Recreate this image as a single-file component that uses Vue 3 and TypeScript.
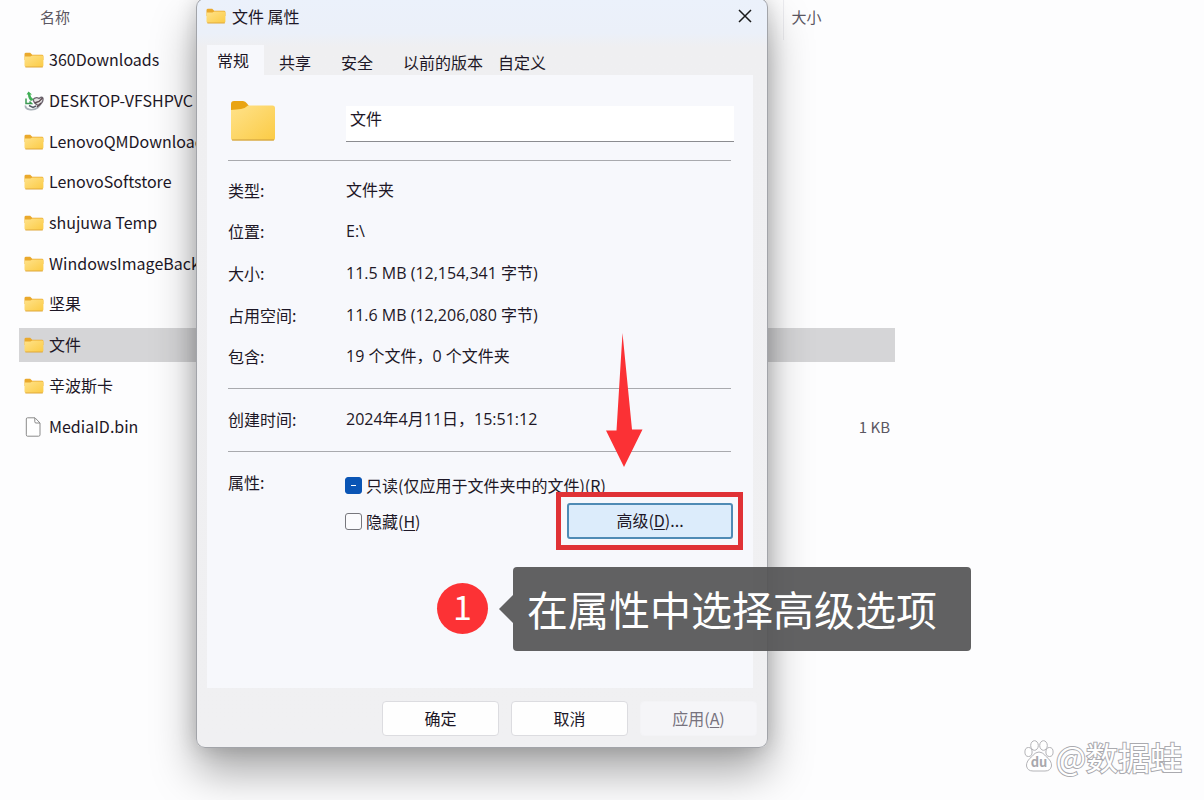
<script setup lang="ts">
import { ref } from 'vue'

type Kind = 'folder' | 'backup' | 'file'
interface Entry {
  name: string
  kind: Kind
  size?: string
}

const entries: Entry[] = [
  { name: '360Downloads', kind: 'folder' },
  { name: 'DESKTOP-VFSHPVC', kind: 'backup' },
  { name: 'LenovoQMDownload', kind: 'folder' },
  { name: 'LenovoSoftstore', kind: 'folder' },
  { name: 'shujuwa Temp', kind: 'folder' },
  { name: 'WindowsImageBackup', kind: 'folder' },
  { name: '坚果', kind: 'folder' },
  { name: '文件', kind: 'folder' },
  { name: '辛波斯卡', kind: 'folder' },
  { name: 'MediaID.bin', kind: 'file', size: '1 KB' },
]
const selected = ref('文件')

const tabs = ['常规', '共享', '安全', '以前的版本', '自定义']
const activeTab = ref('常规')

const folderName = ref('文件')
const details = [
  ['类型:', '文件夹'],
  ['位置:', 'E:\\'],
  ['大小:', '11.5 MB (12,154,341 字节)'],
  ['占用空间:', '11.6 MB (12,206,080 字节)'],
  ['包含:', '19 个文件，0 个文件夹'],
]
</script>

<template>
  <div class="stage">
    <svg class="defs" width="0" height="0" aria-hidden="true">
      <defs>
        <linearGradient id="fold" x1="0" y1="0" x2="1" y2="1">
          <stop offset="0" stop-color="#ffe28a" />
          <stop offset="1" stop-color="#fbcb45" />
        </linearGradient>
        <symbol id="folder" viewBox="0 0 20 16">
          <path d="M0.5 2.2Q0.5 .8 2 .8H6.2L8.2 2.8H18Q19.4 2.8 19.4 4.2V8H.5Z" fill="#eaa92c" />
          <path d="M.5 4.6H6.4L8.4 3.4H18Q19.4 3.4 19.4 4.8V13.6Q19.4 15 18 15H2Q.5 15 .5 13.6Z" fill="url(#fold)" />
          <path d="M1.2 14.7Q1.5 15 2 15H18Q18.6 15 19 14.6" fill="none" stroke="#e0a83a" />
        </symbol>
      </defs>
    </svg>

    <table class="files">
      <thead>
        <tr>
          <th class="name-col">名称</th>
          <th class="size-col">大小</th>
        </tr>
      </thead>
      <tbody>
        <tr v-for="e in entries" :key="e.name" :class="{ selected: e.name === selected }" @click="selected = e.name">
          <td>
            <div class="cell">
              <svg v-if="e.kind === 'folder'" class="icon" viewBox="0 0 20 16"><use href="#folder" /></svg>
              <svg v-else-if="e.kind === 'backup'" class="icon tall" viewBox="0 0 20 20">
                <path d="M1.500 14.500Q1 17.500 5 18.400Q10 19.500 14 16.500L17 13" fill="none" stroke="#a9b0b8" stroke-width="1.600" />
                <path d="M9 8.500Q12 5.500 15 7.500Q18.500 5 19 7.500Q19.500 11.500 14.500 14.500Q10.500 13 9 8.500Z" fill="#e3e0e2" stroke="#6d6670" stroke-width="1.300" />
                <path d="M10.500 12L15 10.500L18.500 7M13 16L17 12" fill="none" stroke="#5c4a50" stroke-width="1.400" />
                <path d="M4.500 .5L2.500 3.500H4Q4 7.500 7 10L9.500 8.500Q6.500 6.500 6.300 3.500H8Z" fill="#3fae55" />
                <path d="M2 7.500V12.500H7.500L5.500 10.500" fill="none" stroke="#3c9a54" stroke-width="1.500" />
                <path d="M5 14.500L9 16.500L12 15" fill="none" stroke="#555d66" stroke-width="1.500" />
              </svg>
              <svg v-else class="icon tall" viewBox="0 0 20 20">
                <path d="M3.500 .8H11L16 6V17.800Q16 19.200 14.600 19.200H3.500Q2.300 19.200 2.300 17.800V2Q2.300 .8 3.500 .8Z" fill="#fff" stroke="#8a8a8a" />
                <path d="M10.800 1V4.800Q10.800 6 12 6H16" fill="none" stroke="#8a8a8a" />
              </svg>
              <span>{{ e.name }}</span>
            </div>
          </td>
          <td><div class="cell size">{{ e.size }}</div></td>
        </tr>
      </tbody>
    </table>

    <section class="dialog" role="dialog" aria-label="文件 属性">
      <header class="title-bar">
        <svg class="icon" viewBox="0 0 20 16"><use href="#folder" /></svg>
        <h1>文件 属性</h1>
        <button class="close" type="button" aria-label="关闭">
          <svg viewBox="0 0 14 14"><path d="M1 1L13 13M13 1L1 13" stroke="#1a1a1a" stroke-width="1.500" /></svg>
        </button>
      </header>

      <nav class="tabs" role="tablist">
        <button
          v-for="t in tabs"
          :key="t"
          type="button"
          role="tab"
          :aria-selected="t === activeTab"
          :class="{ active: t === activeTab }"
          @click="activeTab = t"
        >{{ t }}</button>
      </nav>

      <div class="panel">
        <div class="identity">
          <svg class="big-folder" viewBox="0 0 44 40">
            <path d="M0 3Q0 0 3 0H12Q14.500 0 16 2.500L18 5V12H0Z" fill="#e9a413" />
            <path d="M0 9Q6 8.500 10 8Q14 7.500 17 4.500H41.500Q44 4.500 44 7V37Q44 39.500 41.500 39.500H2.500Q0 39.500 0 37Z" fill="url(#fold)" />
            <path d="M1 39H43" stroke="#c99a3c" />
          </svg>
          <input v-model="folderName" type="text" aria-label="名称" />
        </div>

        <dl class="details">
          <template v-for="[label, value] in details" :key="label">
            <dt>{{ label }}</dt>
            <dd>{{ value }}</dd>
          </template>
        </dl>

        <dl class="created">
          <dt>创建时间:</dt>
          <dd>2024年4月11日，15:51:12</dd>
        </dl>

        <div class="attributes" role="group" aria-labelledby="attr">
          <span id="attr">属性:</span>
          <div class="options">
            <label><input type="checkbox" :indeterminate="true" /><span>只读(仅应用于文件夹中的文件)(<u>R</u>)</span></label>
            <div class="second">
              <label><input type="checkbox" /><span>隐藏(<u>H</u>)</span></label>
              <button class="advanced" type="button"><span>高级(<u>D</u>)...</span></button>
            </div>
          </div>
        </div>
      </div>

      <footer class="actions">
        <button type="button">确定</button>
        <button type="button">取消</button>
        <button type="button" disabled><span>应用(<u>A</u>)</span></button>
      </footer>
    </section>

    <svg class="arrow" viewBox="0 0 38 134" aria-hidden="true">
      <path d="M17.500 0L27 96.500H37.500L19 134L1 97.500H11.500Z" fill="#fb3135" />
    </svg>
    <div class="frame"></div>
    <div class="step">1</div>
    <div class="callout">在属性中选择高级选项</div>

    <div class="watermark">
      <svg viewBox="0 0 30 32" aria-hidden="true">
        <g fill="#fff" stroke="#b4b4b8">
          <ellipse cx="4.500" cy="12" rx="3.600" ry="4.500" />
          <ellipse cx="10.500" cy="5.500" rx="3.800" ry="4.800" />
          <ellipse cx="19.500" cy="5.500" rx="3.800" ry="4.800" />
          <ellipse cx="25.500" cy="12" rx="3.600" ry="4.500" />
          <path d="M15 12Q19 12 21.500 16Q28 21 27.500 26Q26.500 31 21 31H9Q3.500 31 2.500 26Q2 21 8.500 16Q11 12 15 12Z" />
        </g>
        <text x="15" y="27" text-anchor="middle" font-size="13" font-weight="700" fill="#a8a8ad">du</text>
      </svg>
      <span>@数据蛙</span>
    </div>
  </div>
</template>

<style>
body {
  margin: 0;
  background: #fdfdfe;
}
</style>

<style scoped>
.stage {
  position: relative;
  min-height: 100vh;
  overflow: hidden;
  background: #fdfdfe;
  color: #1d1726;
  font-family: "Noto Sans CJK SC", sans-serif;
  font-size: 16px;
  line-height: 24px;
}
.defs { position: absolute; }
button, input {
  font: inherit;
  color: inherit;
}
button { cursor: pointer; }
u { text-underline-offset: 2px; }

.files {
  width: calc(100% - 328px);
  height: 447px;
  margin-left: 19px;
  border-collapse: collapse;
  table-layout: fixed;
}
th {
  height: 40px;
  padding: 0 0 6px 21px;
  box-sizing: border-box;
  color: #5b5762;
  font-size: 15px;
  font-weight: 400;
  text-align: left;
}
th.size-col {
  width: 112px;
  padding-left: 8px;
  border-left: 1px solid #ededf1;
}
td { padding: 0; }
.cell {
  display: flex;
  align-items: center;
  gap: 5px;
  height: 34px;
  padding-left: 5px;
  white-space: nowrap;
  cursor: default;
}
.cell span { padding-bottom: 2px; }
.cell.size {
  justify-content: flex-end;
  padding-right: 5px;
  color: #5b5762;
  font-size: 15px;
}
.selected .cell { background: #d5d5d7; }
.icon {
  flex: none;
  width: 20px;
  height: 16px;
}
.icon.tall { height: 20px; }

.dialog {
  position: absolute;
  top: -2px;
  left: 196px;
  display: flex;
  flex-direction: column;
  width: 572px;
  box-sizing: border-box;
  border: 1px solid #a2a4a9;
  border-radius: 9px;
  background: linear-gradient(#ebf1fb 0, #ebf0f9 34px, #efeff1 48px, #f0f0f2 100%);
  box-shadow: 0 24px 44px rgba(0, 0, 0, .34), 0 0 20px rgba(0, 0, 0, .16);
}
.title-bar {
  display: flex;
  align-items: center;
  gap: 6px;
  height: 34px;
  padding: 0 9px;
}
h1 {
  flex: 1;
  margin: 0;
  font-size: 16px;
  font-weight: 400;
}
.close {
  display: grid;
  place-items: center;
  width: 26px;
  height: 26px;
  padding: 0;
  border: 0;
  background: none;
}
.close svg {
  width: 14px;
  height: 14px;
}
.tabs {
  display: flex;
  align-items: flex-end;
  height: 42px;
  padding-left: 10px;
}
.tabs button {
  height: 27px;
  padding: 0 15px;
  border: 0;
  background: none;
  line-height: 24px;
}
.tabs button:last-child { padding: 0 0; }
.tabs button.active {
  height: 30px;
  padding-left: 10px;
  background: #f7f8fc;
}

.panel {
  height: 613px;
  margin: 0 14px 0 10px;
  padding: 26px 22px 0 21px;
  box-sizing: border-box;
  background: #f7f8fc;
}
.identity {
  display: flex;
  justify-content: space-between;
  padding-left: 3px;
  padding-bottom: 18px;
  border-bottom: 1px solid #a9aaae;
}
.big-folder {
  width: 44px;
  height: 40px;
}
.identity input {
  width: 388px;
  height: 41px;
  padding: 0 4px 6px;
  margin-right: -3px;
  box-sizing: border-box;
  border: 0;
  border-bottom: 1px solid #8b8c90;
  background: linear-gradient(transparent 5px, #fff 5px);
  outline: 0;
}
dl {
  display: grid;
  grid-template-columns: 118px 1fr;
  align-items: center;
  margin: 0;
  border-bottom: 1px solid #a9aaae;
}
dd {
  margin: 0;
  font-family: "Open Sans", "Noto Sans CJK SC", sans-serif;
}
.details {
  height: 228px;
  padding: 8px 0 11px;
  box-sizing: border-box;
}
.created {
  height: 60px;
  padding-bottom: 2px;
}
.attributes {
  display: grid;
  grid-template-columns: 117px 1fr;
  padding-top: 18px;
}
.options {
  display: flex;
  flex-direction: column;
  padding-top: 3px;
}
.options label {
  display: flex;
  align-items: center;
  gap: 4px;
  white-space: nowrap;
}
.options input {
  display: grid;
  place-items: center;
  width: 17px;
  height: 17px;
  margin: 0;
  appearance: none;
  box-sizing: border-box;
  border: 1px solid #77777d;
  border-radius: 3px;
  background: #fbfbfd;
}
.options input:indeterminate {
  border-color: #0a55b5;
  background: #0a55b5;
}
.options input:indeterminate::after {
  width: 5px;
  height: 1px;
  background: #fff;
  content: "";
}
.second {
  display: flex;
  align-items: center;
  justify-content: space-between;
  padding-top: 6px;
  margin-right: -2px;
}
.advanced {
  width: 166px;
  height: 36px;
  padding: 0 0 2px;
  border: 2px solid #4f8bb5;
  border-radius: 3px;
  background: #dcecfb;
}
.actions {
  display: flex;
  justify-content: flex-end;
  gap: 12px;
  padding: 13px 10px 11px;
}
.actions button {
  width: 117px;
  height: 35px;
  padding: 0 0 2px;
  border: 1px solid #dcdce0;
  border-radius: 4px;
  background: #fefefe;
}
.actions button:disabled {
  border-color: #f3f3f6;
  background: #f5f5f8;
  color: #77727e;
}

.arrow {
  position: absolute;
  top: 333px;
  left: 605px;
  width: 38px;
  height: 134px;
}
.frame {
  position: absolute;
  top: 492px;
  left: 556px;
  width: 187px;
  height: 58px;
  box-sizing: border-box;
  border: 5px solid #e03236;
  pointer-events: none;
}
.step {
  position: absolute;
  top: 583px;
  left: 437px;
  width: 51px;
  height: 51px;
  border-radius: 50%;
  background: #fc3235;
  color: #fff;
  font-size: 34px;
  line-height: 46px;
  text-align: center;
}
.callout {
  position: absolute;
  top: 567px;
  left: 513px;
  width: 458px;
  height: 84px;
  padding-left: 14px;
  box-sizing: border-box;
  border-radius: 4px;
  background: rgba(84, 84, 85, .92);
  color: #fff;
  font-size: 41px;
  line-height: 82px;
  white-space: nowrap;
}
.callout::before {
  position: absolute;
  top: 28px;
  right: 100%;
  border: 14px solid transparent;
  border-left-width: 0;
  border-right-color: rgba(84, 84, 85, .92);
  content: "";
}
.watermark {
  position: absolute;
  right: 22px;
  bottom: 24px;
  display: flex;
  align-items: center;
  gap: 2px;
  color: #fff;
  font-size: 32px;
  line-height: 40px;
}
.watermark svg {
  width: 30px;
  height: 32px;
}
.watermark span {
  -webkit-text-stroke: 2px #aaaaaf;
  paint-order: stroke fill;
}
</style>
